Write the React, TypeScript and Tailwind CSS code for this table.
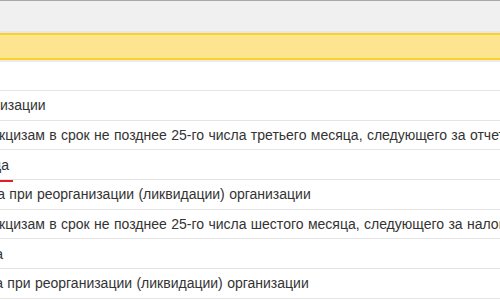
const rows = [
  { text: "", shift: "ml-0" },
  { text: "изации", shift: "ml-0" },
  { text: "кцизам в срок не позднее 25-го числа третьего месяца, следующего за отчетным", shift: "ml-[-1px]" },
  { text: "да", shift: "ml-[-7px]" },
  { text: "да при реорганизации (ликвидации) организации", shift: "ml-[-11px]", mark: true },
  { text: "кцизам в срок не позднее 25-го числа шестого месяца, следующего за налоговым периодом", shift: "ml-[-1px]" },
  { text: "да", shift: "ml-[-13px]" },
  { text: "да при реорганизации (ликвидации) организации", shift: "ml-[-13px]" },
];

function Row({ text, shift, mark, first }: { text: string; shift: string; mark?: boolean; first?: boolean }) {
  return (
    <div
      className={`relative flex items-center overflow-hidden border-b border-[#e4e4e4] bg-white ${first ? "h-[29px]" : "h-[29.7px]"}`}
    >
      {mark && <span className="absolute left-0 top-0 h-[2px] w-[13px] bg-[#e31e24]" />}
      <span className={`whitespace-nowrap text-[14px] leading-none text-[#333] [word-spacing:0.5px] ${shift}`}>{text}</span>
    </div>
  );
}

export default function App() {
  return (
    <div className="h-[300px] w-[500px] overflow-hidden bg-white font-['Liberation_Sans',Arial,sans-serif]">
      {/* toolbar strip */}
      <div className="h-[31px] border-t border-[#a8a8a8] bg-[#f0f0f0]" />
      <div className="h-[2px] bg-[#e6e6e6]" />
      {/* selected group row */}
      <div className="h-[27px] border-y-2 border-[#fcd02a] bg-[#fde58f]" />
      <div className="h-[2px] bg-[#ebebeb]" />
      {rows.map((r, i) => (
        <Row key={i} text={r.text} shift={r.shift} mark={r.mark} first={i === 0} />
      ))}
    </div>
  );
}
